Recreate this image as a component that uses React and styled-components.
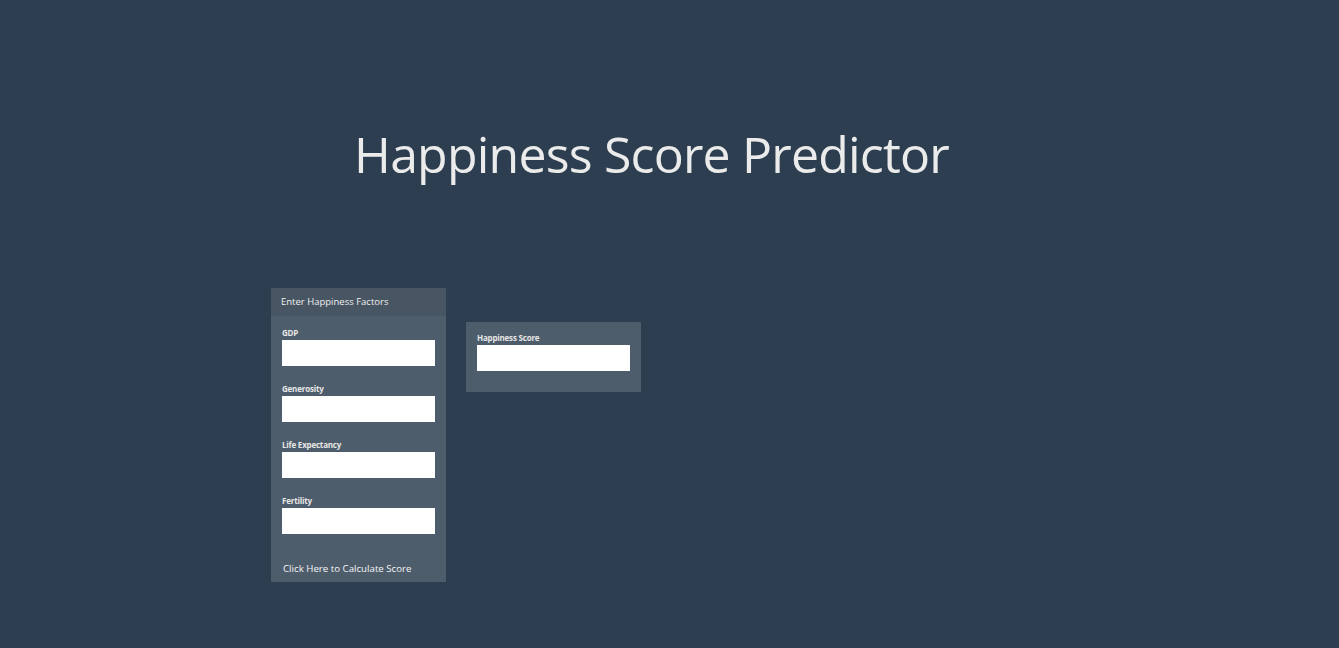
import React from 'react'
import styled, { createGlobalStyle } from 'styled-components'

const GlobalStyle = createGlobalStyle`
    html, body {
        margin: 0;
        padding: 0;
        background: #2c3e50;
        font-family: "Open Sans", "Liberation Sans", sans-serif;
    }
`

const Page = styled.div`
    min-height: 648px;
    background: #2c3e50;
    overflow: hidden;
`

const Title = styled.h1`
    margin: 0;
    padding: 121px 36px 0 0;
    height: 69px;
    line-height: 66px;
    text-align: center;
    font-weight: normal;
    font-size: 50px;
    letter-spacing: -0.8px;
    color: #ebebeb;
`

const Row = styled.div`
    display: flex;
    align-items: flex-start;
    gap: 20px;
    margin-top: 98px;
    padding-left: 271px;
`

const Panel = styled.div`
    width: 175px;
    background: #4e5d6c;
    margin-top: ${p => p.offset || 0}px;
`

const PanelHeading = styled.div`
    height: 28px;
    line-height: 27px;
    padding: 0 10px;
    background: #485563;
    color: #f0f0f0;
    font-size: 9.5px;
`

const PanelBody = styled.div`
    display: flex;
    flex-direction: column;
    gap: 18px;
    padding: 12px 11px 0 11px;
`

const Field = styled.div`
    display: flex;
    flex-direction: column;
    gap: 3px;
`

const Label = styled.label`
    font-size: 8px;
    font-weight: bold;
    color: #e6e6e6;
    letter-spacing: -0.2px;
    line-height: 9px;
    height: 9px;
`

const Input = styled.input`
    box-sizing: border-box;
    width: 153px;
    height: 26px;
    border: none;
    background: #ffffff;
    padding: 0 6px;
    margin: 0;
    outline: none;
`

const Button = styled.button`
    display: block;
    background: transparent;
    border: none;
    color: #f4f4f4;
    font-family: "Open Sans", "Liberation Sans", sans-serif;
    font-size: 9.7px;
    padding: 0 12px;
    margin-top: 21px;
    height: 27px;
    line-height: 24px;
    text-align: left;
    cursor: pointer;
`

const ResultBody = styled.div`
    display: flex;
    flex-direction: column;
    gap: 3px;
    padding: 11px 11px 21px 11px;
`

const factors = ['GDP', 'Generosity', 'Life Expectancy', 'Fertility']

const App = () => {
    return (
        <Page>
            <GlobalStyle />
            <Title>Happiness Score Predictor</Title>
            <Row>
                <Panel>
                    <PanelHeading>Enter Happiness Factors</PanelHeading>
                    <PanelBody>
                        {factors.map(f => (
                            <Field key={f}>
                                <Label>{f}</Label>
                                <Input type="text" />
                            </Field>
                        ))}
                    </PanelBody>
                    <Button>Click Here to Calculate Score</Button>
                </Panel>
                <Panel offset={34}>
                    <ResultBody>
                        <Label>Happiness Score</Label>
                        <Input type="text" />
                    </ResultBody>
                </Panel>
            </Row>
        </Page>
    )
}

export default App
